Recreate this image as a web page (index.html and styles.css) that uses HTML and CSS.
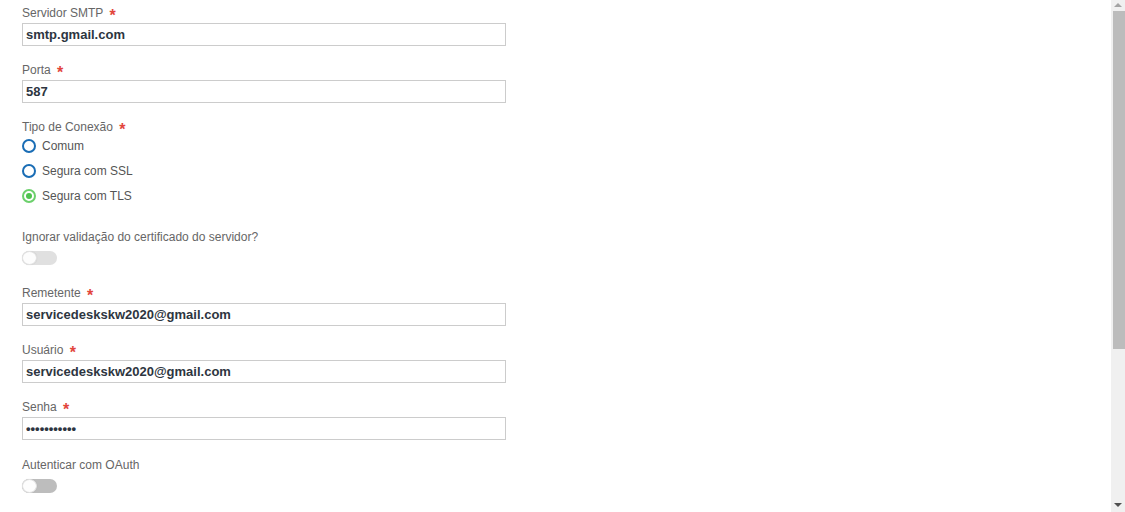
FILE: index.html
```html
<!DOCTYPE html>
<html lang="pt-BR">
<head>
    <meta charset="UTF-8">
    <meta name="viewport" content="width=device-width, initial-scale=1.0">
    <title>Configuração de E-mail</title>
    <link rel="stylesheet" href="styles.css">
</head>
<body>
    <form class="email-form">
        <div class="field">
            <label class="field-label" for="smtpServer">Servidor SMTP <span class="required">*</span></label>
            <input type="text" id="smtpServer" class="text-input" value="smtp.gmail.com">
        </div>

        <div class="field">
            <label class="field-label" for="smtpPort">Porta <span class="required">*</span></label>
            <input type="text" id="smtpPort" class="text-input" value="587">
        </div>

        <div class="field field-radios">
            <span class="field-label">Tipo de Conexão <span class="required">*</span></span>
            <div class="radio-group">
                <label class="radio-option">
                    <input type="radio" name="connType" value="comum">
                    <span class="radio-mark"></span>
                    Comum
                </label>
                <label class="radio-option">
                    <input type="radio" name="connType" value="ssl">
                    <span class="radio-mark"></span>
                    Segura com SSL
                </label>
                <label class="radio-option">
                    <input type="radio" name="connType" value="tls" checked>
                    <span class="radio-mark"></span>
                    Segura com TLS
                </label>
            </div>
        </div>

        <div class="field field-toggle">
            <span class="field-label">Ignorar validação do certificado do servidor?</span>
            <label class="toggle toggle-light">
                <input type="checkbox">
                <span class="toggle-knob"></span>
            </label>
        </div>

        <div class="field">
            <label class="field-label" for="sender">Remetente <span class="required">*</span></label>
            <input type="text" id="sender" class="text-input" value="servicedeskskw2020@gmail.com">
        </div>

        <div class="field">
            <label class="field-label" for="user">Usuário <span class="required">*</span></label>
            <input type="text" id="user" class="text-input" value="servicedeskskw2020@gmail.com">
        </div>

        <div class="field">
            <label class="field-label" for="password">Senha <span class="required">*</span></label>
            <input type="password" id="password" class="text-input" value="senhasecret">
        </div>

        <div class="field field-toggle field-last">
            <span class="field-label">Autenticar com OAuth</span>
            <label class="toggle">
                <input type="checkbox">
                <span class="toggle-knob"></span>
            </label>
        </div>
    </form>

    <!-- window scrollbar as seen in the capture -->
    <div class="scrollbar">
        <span class="scroll-arrow scroll-up"></span>
        <div class="scroll-track">
            <div class="scroll-thumb"></div>
        </div>
        <span class="scroll-arrow scroll-down"></span>
    </div>
</body>
</html>
```

FILE: styles.css
```css
body {
    font-family: 'Liberation Sans', Arial, sans-serif;
    background-color: #fff;
    color: #333;
    margin: 0;
    padding: 0;
}

.email-form {
    padding: 4px 22px 0 22px;
}

.field {
    display: flex;
    flex-direction: column;
    align-items: flex-start;
    margin-bottom: 15px;
}

.field-label {
    display: block;
    height: 19px;
    font-size: 12px;
    line-height: 19px;
    color: #666;
}

.required {
    color: #e2453c;
    font-size: 16px;
    line-height: 0;
    font-weight: bold;
    margin-left: 3px;
    position: relative;
    top: 4px;
}

.text-input {
    width: 484px;
    height: 23px;
    padding: 0 3px;
    border: 1px solid #ccc;
    border-radius: 0;
    box-sizing: border-box;
    font-family: 'Liberation Sans', Arial, sans-serif;
    font-size: 13px;
    font-weight: bold;
    color: #2d3540;
    outline: none;
}

/* radios */
.field-radios {
    margin-bottom: 23px;
}

.radio-group {
    display: flex;
    flex-direction: column;
    gap: 7px;
}

.radio-option {
    display: flex;
    align-items: center;
    height: 18px;
    font-size: 12px;
    color: #555;
    cursor: pointer;
}

.radio-option input {
    display: none;
}

.radio-mark {
    width: 14px;
    height: 14px;
    border: 2px solid #1a6db5;
    border-radius: 50%;
    box-sizing: border-box;
    margin-right: 6px;
    position: relative;
}

.radio-option input:checked + .radio-mark {
    border-color: #6cd06c;
}

.radio-option input:checked + .radio-mark::after {
    content: "";
    position: absolute;
    left: 2px;
    top: 2px;
    width: 6px;
    height: 6px;
    border-radius: 50%;
    background-color: #4fc34f;
}

/* toggles */
.field-toggle {
    margin-bottom: 19px;
}

.field-toggle .field-label {
    margin-bottom: 4px;
}

.toggle {
    display: block;
    position: relative;
    width: 35px;
    height: 14px;
    border-radius: 7px;
    background-color: #bdbdbd;
    cursor: pointer;
}

.toggle-light {
    background-color: #e0e0e0;
}

.toggle input {
    display: none;
}

.toggle-knob {
    position: absolute;
    left: 0;
    top: 0;
    width: 15px;
    height: 14px;
    border-radius: 50%;
    box-sizing: border-box;
    border: 1px solid #e2e2e2;
    background-color: #fdfdfd;
    box-shadow: 0 0 1px rgba(0, 0, 0, 0.15);
}

.field-last {
    padding-top: 1px;
    margin-bottom: 0;
}

/* scrollbar */
.scrollbar {
    position: fixed;
    top: 0;
    right: 0;
    bottom: 0;
    width: 14px;
    background-color: #f0f0f0;
    display: flex;
    flex-direction: column;
    align-items: center;
}

.scroll-arrow {
    width: 0;
    height: 0;
    border-left: 4px solid transparent;
    border-right: 4px solid transparent;
    margin: 3px 0 4px;
}

.scroll-up {
    border-bottom: 4px solid #a3a3a3;
}

.scroll-down {
    border-top: 4px solid #505050;
    margin: 3px 0 5px;
}

.scroll-track {
    flex: 1;
    width: 100%;
}

.scroll-thumb {
    margin-left: 2px;
    width: 12px;
    height: 338px;
    background-color: #bcbcbc;
}
```
